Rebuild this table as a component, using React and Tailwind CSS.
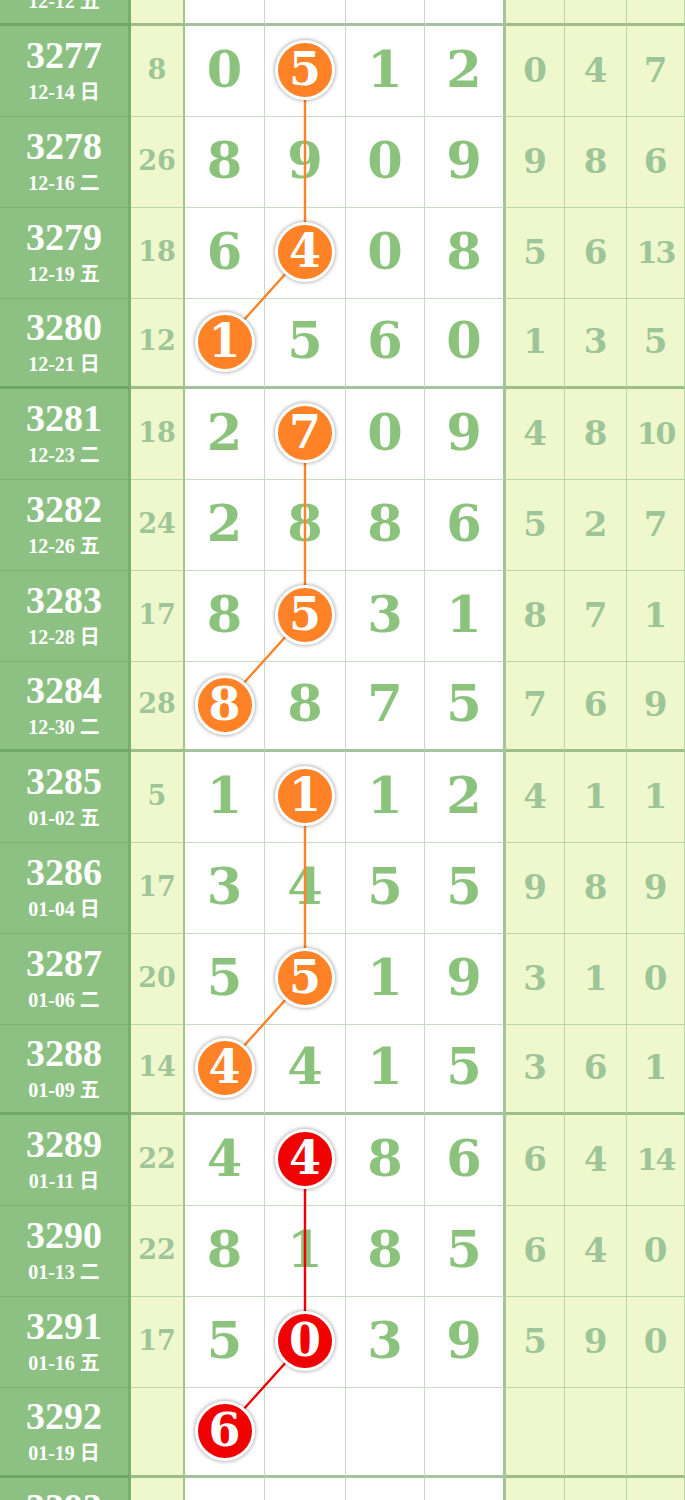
import React from 'react';

const rows = [
  { no: '3277', date: '12-14 日', sum: '8', d: ['0', '5', '1', '2'], r: ['0', '4', '7'], ball: 1 },
  { no: '3278', date: '12-16 二', sum: '26', d: ['8', '9', '0', '9'], r: ['9', '8', '6'] },
  { no: '3279', date: '12-19 五', sum: '18', d: ['6', '4', '0', '8'], r: ['5', '6', '13'], ball: 1 },
  { no: '3280', date: '12-21 日', sum: '12', d: ['1', '5', '6', '0'], r: ['1', '3', '5'], ball: 0 },
  { no: '3281', date: '12-23 二', sum: '18', d: ['2', '7', '0', '9'], r: ['4', '8', '10'], ball: 1 },
  { no: '3282', date: '12-26 五', sum: '24', d: ['2', '8', '8', '6'], r: ['5', '2', '7'] },
  { no: '3283', date: '12-28 日', sum: '17', d: ['8', '5', '3', '1'], r: ['8', '7', '1'], ball: 1 },
  { no: '3284', date: '12-30 二', sum: '28', d: ['8', '8', '7', '5'], r: ['7', '6', '9'], ball: 0 },
  { no: '3285', date: '01-02 五', sum: '5', d: ['1', '1', '1', '2'], r: ['4', '1', '1'], ball: 1 },
  { no: '3286', date: '01-04 日', sum: '17', d: ['3', '4', '5', '5'], r: ['9', '8', '9'] },
  { no: '3287', date: '01-06 二', sum: '20', d: ['5', '5', '1', '9'], r: ['3', '1', '0'], ball: 1 },
  { no: '3288', date: '01-09 五', sum: '14', d: ['4', '4', '1', '5'], r: ['3', '6', '1'], ball: 0 },
  { no: '3289', date: '01-11 日', sum: '22', d: ['4', '4', '8', '6'], r: ['6', '4', '14'], ball: 1 },
  { no: '3290', date: '01-13 二', sum: '22', d: ['8', '1', '8', '5'], r: ['6', '4', '0'] },
  { no: '3291', date: '01-16 五', sum: '17', d: ['5', '0', '3', '9'], r: ['5', '9', '0'], ball: 1 },
  { no: '3292', date: '01-19 日', sum: '', d: ['6', '', '', ''], r: ['', '', ''], ball: 0 },
];

const TOP = 26;
const heightOf = (i) => (i % 4 === 3 ? 90 : 91);
const borderOf = (i) => (i % 4 === 3 ? 3 : 1);
const colX = [224.5, 305];

const centers = [];
let y = TOP;
rows.forEach((_, i) => {
  centers.push(y + (heightOf(i) - borderOf(i)) / 2 - 1);
  y += heightOf(i);
});

const serif = "font-['DejaVu_Serif','Liberation_Serif',serif]";
const left = "font-['Liberation_Serif','Noto_Sans_CJK_SC',serif]";

function Ball({ n, red }) {
  return (
    <div
      className={`relative z-20 flex h-[60px] w-[60px] items-center justify-center rounded-full border-[3px] border-white text-[46px] font-bold leading-none text-white shadow-[0_0_4px_rgba(0,0,0,0.45)] ${serif} ${red ? 'bg-[#f00000]' : 'bg-[#ff8226]'}`}
    >
      <span className="-mt-[2px]">{n}</span>
    </div>
  );
}

function Row({ row, last, style }) {
  const b = last ? 'border-b-[3px] border-b-[rgba(90,145,80,0.55)]' : 'border-b border-b-[rgba(95,150,85,0.35)]';
  const thin = 'border-r border-r-[rgba(95,150,85,0.35)]';
  return (
    <div className={`grid grid-cols-[131px_54px_80px_81px_79px_81px_59px_62px_58px] ${last ? 'h-[90px]' : 'h-[91px]'}`} style={style}>
      <div className={`flex flex-col items-center justify-center border-r-[3px] border-r-[#7aae6d] bg-[#8dc183] pb-[4px] text-white ${b} ${left}`}>
        <div className="text-[38px] font-bold leading-none">{row.no}</div>
        <div className="mt-[8px] text-[20px] font-bold leading-none">{row.date}</div>
      </div>
      <div className={`flex items-center justify-center border-r-2 border-r-[rgba(90,145,80,0.5)] bg-[#eff8cd] pb-[2px] text-[27px] font-bold text-[#9dc597] ${b} ${serif}`}>
        {row.sum}
      </div>
      {row.d.map((v, k) => (
        <div
          key={k}
          className={`flex items-center justify-center bg-white pb-[2px] text-[51px] font-bold leading-none text-[#8bc37d] ${b} ${serif} ${k === 3 ? 'border-r-[3px] border-r-[rgba(90,145,80,0.55)]' : thin}`}
        >
          {row.ball === k ? <Ball n={v} red={row.red} /> : <span className="-mt-[2px]">{v}</span>}
        </div>
      ))}
      {row.r.map((v, k) => (
        <div
          key={k}
          className={`flex items-center justify-center bg-[#eff8cd] pb-[2px] font-bold text-[#9dc597] ${b} ${serif} ${thin} ${v.length > 1 ? 'text-[30px] tracking-[-2px]' : 'text-[34px]'}`}
        >
          {v}
        </div>
      ))}
    </div>
  );
}

export default function App() {
  const lines = [];
  for (let g = 0; g < 4; g++) {
    const a = g * 4;
    const pts = [a, a + 2, a + 3].map((i) => [colX[rows[i].ball], centers[i]]);
    const color = g === 3 ? '#f00000' : '#ff8226';
    lines.push(
      <polyline
        key={g}
        points={pts.map((p) => p.join(',')).join(' ')}
        fill="none"
        stroke={color}
        strokeWidth="2.4"
      />
    );
  }

  return (
    <div className="relative h-[1500px] w-[685px] overflow-hidden bg-white">
      <Row row={{ no: '3276', date: '12-12 五', sum: '', d: ['', '', '', ''], r: ['', '', ''] }} last style={{ marginTop: -64 }} />
      {rows.map((row, i) => (
        <Row key={row.no} row={{ ...row, red: i >= 12 }} last={i % 4 === 3} />
      ))}
      <Row row={{ no: '3293', date: '01-21 二', sum: '', d: ['', '', '', ''], r: ['', '', ''] }} />
      <svg className="pointer-events-none absolute left-0 top-0 z-10" width="685" height="1500">
        {lines}
      </svg>
    </div>
  );
}
